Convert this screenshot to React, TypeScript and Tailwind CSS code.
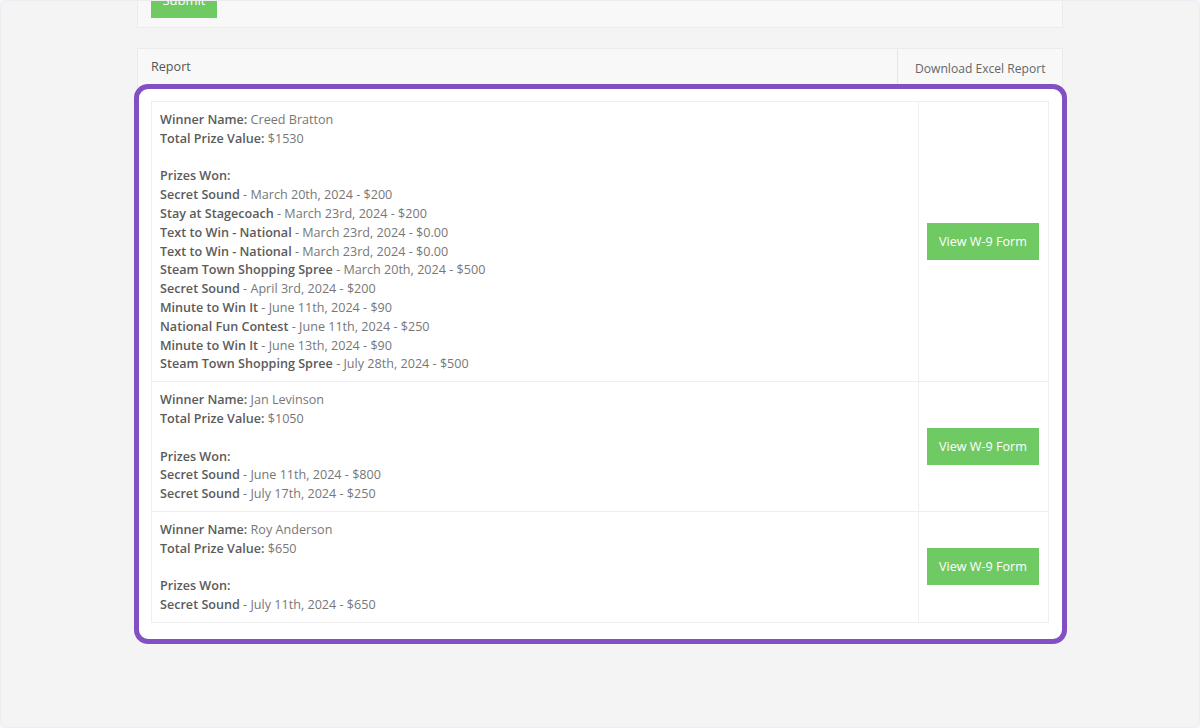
const winners = [
  {
    name: 'Creed Bratton',
    total: '$1530',
    prizes: [
      ['Secret Sound', 'March 20th, 2024 - $200'],
      ['Stay at Stagecoach', 'March 23rd, 2024 - $200'],
      ['Text to Win - National', 'March 23rd, 2024 - $0.00'],
      ['Text to Win - National', 'March 23rd, 2024 - $0.00'],
      ['Steam Town Shopping Spree', 'March 20th, 2024 - $500'],
      ['Secret Sound', 'April 3rd, 2024 - $200'],
      ['Minute to Win It', 'June 11th, 2024 - $90'],
      ['National Fun Contest', 'June 11th, 2024 - $250'],
      ['Minute to Win It', 'June 13th, 2024 - $90'],
      ['Steam Town Shopping Spree', 'July 28th, 2024 - $500'],
    ],
  },
  {
    name: 'Jan Levinson',
    total: '$1050',
    prizes: [
      ['Secret Sound', 'June 11th, 2024 - $800'],
      ['Secret Sound', 'July 17th, 2024 - $250'],
    ],
  },
  {
    name: 'Roy Anderson',
    total: '$650',
    prizes: [['Secret Sound', 'July 11th, 2024 - $650']],
  },
];

const App = () => {
  return (
    <div
      className="w-[1200px] h-[728px] bg-[#f6f6fa] overflow-hidden"
      style={{ fontFamily: '"Open Sans", "Liberation Sans", sans-serif' }}
    >
      <div className="h-full rounded-lg bg-[#f4f4f4] border border-[#ececf2] overflow-hidden">
        <div className="w-[926px] ml-[136px]">
          {/* form card (scrolled off the top) */}
          <div className="h-[61px] -mt-[34px] bg-[#f8f8f8] border border-[#ebebeb] flex items-end px-[13px] pb-[9px]">
            <button className="h-[34px] w-[66px] bg-[#6fca63] text-white text-[13px]">Submit</button>
          </div>

          {/* report card */}
          <div className="mt-[20px] bg-[#f8f8f8] border border-[#ebebeb]">
            <div className="h-[36px] flex items-stretch">
              <div className="flex-1 flex items-center pl-[13px] text-[12.6px] text-[#555]">Report</div>
              <div className="w-[165px] border-l border-[#e6e6e6] flex items-center pl-[17px] pt-[5px] text-[12.1px] text-[#666]">
                Download Excel Report
              </div>
            </div>

            <div className="relative ml-[1px] mt-[4px] bg-white rounded-[9px] outline-[5px] outline-solid outline-[#8350c4] pl-[12px] pr-[13px] pt-[12px] pb-[16px]">
              <div className="border border-[#efefef] text-[12.6px] leading-[18.8px]">
                {winners.map((w, i) => (
                  <div key={i} className={`flex ${i > 0 ? 'border-t border-[#efefef]' : ''}`}>
                    <div className="flex-1 px-[8px] pt-[9px] pb-[7px] text-[#777]">
                      <div>
                        <span className="font-semibold text-[#5b5b5b]">Winner Name:</span> {w.name}
                      </div>
                      <div>
                        <span className="font-semibold text-[#5b5b5b]">Total Prize Value:</span> {w.total}
                      </div>
                      <div className="h-[18.8px]" />
                      <div className="font-semibold text-[#5b5b5b]">Prizes Won:</div>
                      {w.prizes.map(([title, detail], j) => (
                        <div key={j}>
                          <span className="font-semibold text-[#5b5b5b]">{title}</span> - {detail}
                        </div>
                      ))}
                    </div>
                    <div className="w-[130px] border-l border-[#efefef] px-[8px] flex items-center">
                      <button className="w-[112px] h-[37px] bg-[#6fca63] text-white text-[12.6px] pt-[1px]">View W-9 Form</button>
                    </div>
                  </div>
                ))}
              </div>
            </div>
          </div>
        </div>
      </div>
    </div>
  );
};

export default App;
